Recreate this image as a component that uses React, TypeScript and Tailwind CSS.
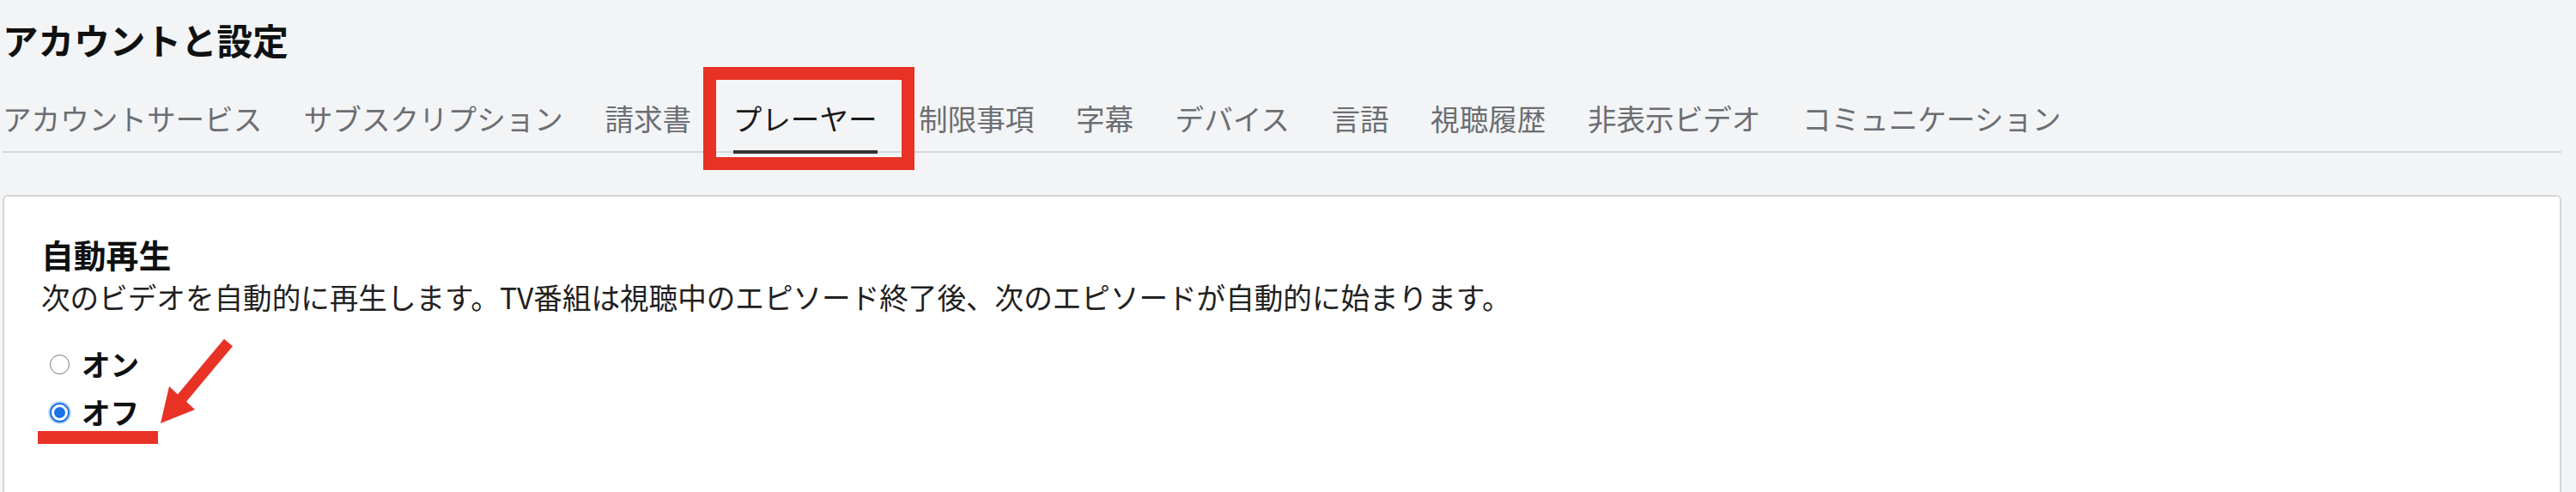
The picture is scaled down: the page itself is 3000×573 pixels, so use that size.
import React from "react";

const tabs = [
  "アカウントサービス",
  "サブスクリプション",
  "請求書",
  "プレーヤー",
  "制限事項",
  "字幕",
  "デバイス",
  "言語",
  "視聴履歴",
  "非表示ビデオ",
  "コミュニケーション",
];

export default function App() {
  return (
    <div
      className="relative w-[3000px] h-[573px] overflow-hidden bg-[#f3f4f6] text-[#0f1111]"
      style={{ fontFamily: '"Noto Sans CJK JP", "Noto Sans", "Liberation Sans", sans-serif' }}
    >
      <div className="ml-[3px] w-[2980px] pt-[21px]">
        <h1 className="text-[41.6px] leading-[50px] font-bold">アカウントと設定</h1>

        <nav className="mt-[47px] flex gap-[48.5px] border-b-2 border-[#d5d8db]">
          {tabs.map((t) => {
            const active = t === "プレーヤー";
            return (
              <div
                key={t}
                className={
                  "-mb-[3px] pb-[17px] text-[33.6px] leading-[40px] whitespace-nowrap border-b-4 " +
                  (active ? "border-[#333333] text-[#1a1a1a]" : "border-transparent text-[#6b6e72]")
                }
              >
                {t}
              </div>
            );
          })}
        </nav>

        <section className="mt-[49px] h-[420px] rounded-[6px] border-2 border-[#d3d6d9] bg-white pl-[43px] pt-[44px]">
          <h2 className="text-[37.8px] leading-[46px] font-bold">自動再生</h2>
          <p className="mt-[7px] text-[33.6px] leading-[40px] text-[#1f2121]">
            次のビデオを自動的に再生します。TV番組は視聴中のエピソード終了後、次のエピソードが自動的に始まります。
          </p>

          <div className="mt-[38px] flex flex-col gap-[16px]">
            <label className="flex items-center">
              <span className="ml-[10px] mr-[14px] h-[23px] w-[23px] rounded-full border-[1.5px] border-[#767676] bg-white" />
              <span className="text-[33.6px] leading-[40px] font-bold">オン</span>
            </label>
            <label className="flex items-center">
              <span className="ml-[10px] mr-[14px] flex h-[23px] w-[23px] items-center justify-center rounded-full border-2 border-[#1a73e8] bg-white shadow-[0_0_0_2px_#c4dbf6]">
                <span className="h-[13px] w-[13px] rounded-full bg-[#1a73e8]" />
              </span>
              <span className="text-[33.6px] leading-[40px] font-bold">オフ</span>
            </label>
          </div>
        </section>
      </div>

      {/* Annotation: red box around active tab */}
      <div className="absolute left-[819px] top-[78px] h-[120px] w-[246px] border-[15px] border-[#e83226]" />

      {/* Annotation: red underline */}
      <div className="absolute left-[44px] top-[502px] h-[15px] w-[140px] bg-[#e83226]" />

      {/* Annotation: red arrow */}
      <svg className="absolute left-0 top-0" width="400" height="573" viewBox="0 0 400 573">
        <polygon
          points="261,394.8 271,403.2 217,467.7 227,477 187,493 197,450 207,459.3"
          fill="#e83226"
        />
      </svg>
    </div>
  );
}
